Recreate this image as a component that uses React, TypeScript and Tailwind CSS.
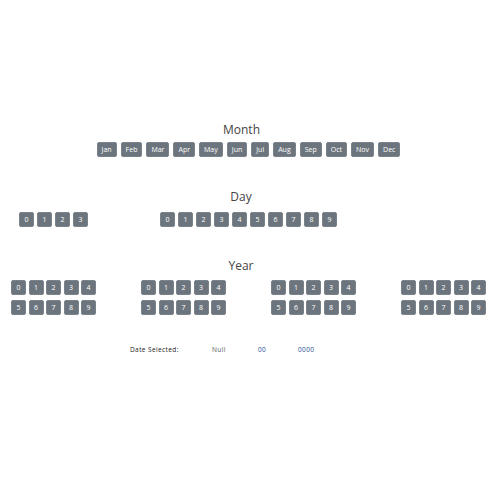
import React from "react";

const months = ["Jan","Feb","Mar","Apr","May","Jun","Jul","Aug","Sep","Oct","Nov","Dec"];

function Btn({ label, cls }: { label: string; cls: string }) {
  return (
    <div className={`h-[15px] shrink-0 flex items-center justify-center bg-[#6c757d] rounded-[2px] text-white text-[7px] leading-none border border-[#7a828a] ${cls}`}>
      {label}
    </div>
  );
}

function Digits({ list }: { list: number[] }) {
  return (
    <div className="flex gap-[3px]">
      {list.map((d) => (
        <Btn key={d} label={String(d)} cls="w-[15px]" />
      ))}
    </div>
  );
}

function YearGroup() {
  return (
    <div className="w-[130px] shrink-0 flex flex-col gap-[5px]">
      <div className="flex gap-[2.5px]">
        {[0,1,2,3,4].map((d) => <Btn key={d} label={String(d)} cls="w-[15px]" />)}
      </div>
      <div className="flex gap-[2.5px]">
        {[5,6,7,8,9].map((d) => <Btn key={d} label={String(d)} cls="w-[15px]" />)}
      </div>
    </div>
  );
}

export default function App() {
  return (
    <div className="w-[500px] h-[500px] bg-white relative overflow-hidden" style={{ fontFamily: '"Open Sans", "Noto Sans", sans-serif' }}>
      <div className="pt-[123px]">
        <div className="text-center text-[12px] leading-[14px] text-[#444] pr-[17px]">Month</div>
        <div className="mt-[5px] flex justify-center gap-[4px] pr-[3px]">
          {months.map((m) => (
            <Btn key={m} label={m} cls="px-[4px]" />
          ))}
        </div>

        <div className="mt-[33px] text-center text-[12px] leading-[14px] text-[#444] pr-[18px]">Day</div>
        <div className="mt-[8px] flex">
          <div className="ml-[19px]">
            <Digits list={[0,1,2,3]} />
          </div>
          <div className="ml-[72px]">
            <Digits list={[0,1,2,3,4,5,6,7,8,9]} />
          </div>
        </div>

        <div className="mt-[32px] text-center text-[12px] leading-[14px] text-[#444] pr-[18px]">Year</div>
        <div className="mt-[7px] flex pl-[11px]">
          <YearGroup />
          <YearGroup />
          <YearGroup />
          <YearGroup />
        </div>

        <div className="mt-[30px] relative h-[10px] text-[6.5px] leading-[10px] tracking-[0.4px]">
          <span className="absolute left-[130px] top-0 text-[#222]">Date Selected:</span>
          <span className="absolute left-[212px] top-0 text-[#555]">Null</span>
          <span className="absolute left-[258px] top-0 text-[#2a4c8f]">00</span>
          <span className="absolute left-[298px] top-0 text-[#2a4c8f]">0000</span>
        </div>
      </div>
    </div>
  );
}
